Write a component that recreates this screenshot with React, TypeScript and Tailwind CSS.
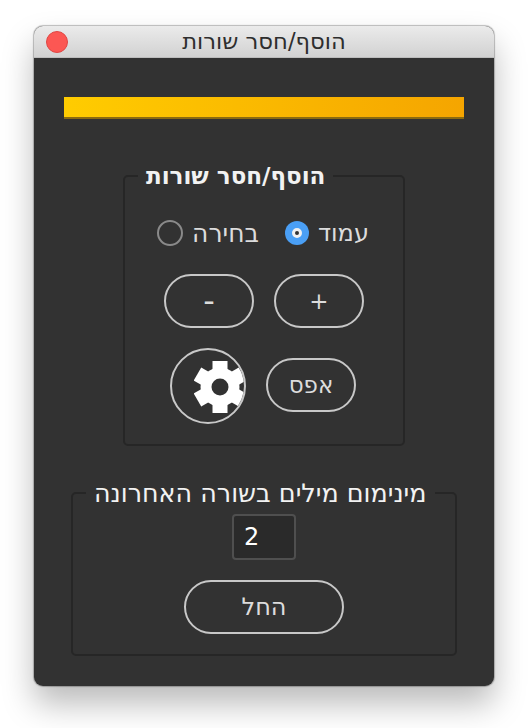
import React from 'react';

function PillButton({ label, className }: { label: string; className: string }) {
  return (
    <button className={`flex items-center justify-center rounded-full border-2 border-[#c8c8c8] text-[#dcdcdc] ${className}`}>
      {label}
    </button>
  );
}

function Gear() {
  return (
    <svg viewBox="0 0 52 52" className="w-[52px] h-[52px] absolute left-[22px] top-[11px]">
      <circle cx="26" cy="26" r="19.5" fill="#ffffff" />
      {[0, 60, 120, 180, 240, 300].map((a) => (
        <rect key={a} x="18.5" y="0" width="15" height="12" fill="#ffffff" transform={`rotate(${a} 26 26)`} />
      ))}
      <circle cx="26" cy="26" r="8.5" fill="#323232" />
    </svg>
  );
}

function Radio({ label, checked, className }: { label: string; checked?: boolean; className: string }) {
  return (
    <label className={`flex items-center gap-[9px] text-[#dcdcdc] leading-none ${className}`}>
      <span>{label}</span>
      {checked ? (
        <span className="w-[24px] h-[24px] rounded-full bg-[#4a9ff5] flex items-center justify-center">
          <span className="w-[10px] h-[10px] rounded-full border-[3px] border-[#f0f0f0] bg-[#323232]" />
        </span>
      ) : (
        <span className="w-[26px] h-[26px] rounded-full border-2 border-[#8a8a8a]" />
      )}
    </label>
  );
}

export default function App() {
  return (
    <div className="w-[528px] h-[728px] bg-white pt-[26px] pl-[34px] overflow-hidden font-['DejaVu_Sans','Liberation_Sans',sans-serif]">
      <div className="w-[460px] h-[660px] rounded-[9px] overflow-hidden bg-[#323232] flex flex-col shadow-[0_18px_32px_rgba(0,0,0,0.27),0_0_1px_1px_rgba(0,0,0,0.25)]">
        {/* Title bar */}
        <div className="relative h-[32px] flex-shrink-0 flex items-center justify-center bg-gradient-to-b from-[#ebebeb] to-[#d2d2d2] border-b border-[#bdbdbd]">
          <span className="absolute left-[12px] top-[5px] w-[22px] h-[22px] rounded-full bg-[#fc5753] border border-[#df4744]" />
          <span dir="rtl" className="text-[22.7px] leading-none text-[#2e2e2e]">הוסף/חסר שורות</span>
        </div>

        <div className="flex flex-col items-center">
          {/* Progress */}
          <div className="mt-[39px] w-[400px] h-[22px] bg-gradient-to-r from-[#ffcc00] to-[#f5a500] border-b-2 border-[#8a6a10]" />

          {/* Add / remove lines */}
          <fieldset className="mt-[46px] w-[282px] h-[281px] rounded-[5px] border-2 border-[#262626]">
            <legend dir="rtl" className="ml-[13px] px-[8px] text-[23px] font-bold leading-[22px] text-[#f2f2f2]">הוסף/חסר שורות</legend>
            <div dir="rtl" className="mt-[33px] pr-[2px] flex justify-center gap-[26px]">
              <Radio label="עמוד" checked className="text-[24px]" />
              <Radio label="בחירה" className="text-[25px]" />
            </div>
            <div dir="rtl" className="mt-[28px] flex justify-center gap-[20px]">
              <PillButton label="+" className="w-[90px] h-[54px] text-[23px]" />
              <PillButton label="-" className="w-[90px] h-[54px] text-[32px] leading-none" />
            </div>
            <div dir="rtl" className="mt-[20px] pr-[2px] flex justify-center items-center gap-[20px]">
              <PillButton label="אפס" className="w-[90px] h-[54px] mb-[2px] text-[23px]" />
              <button className="relative w-[76px] h-[76px] rounded-full border-2 border-[#c8c8c8] overflow-hidden">
                <Gear />
              </button>
            </div>
          </fieldset>

          {/* Minimum words */}
          <fieldset className="mt-[36px] w-[386px] h-[174px] rounded-[5px] border-2 border-[#262626] flex flex-col items-center">
            <legend dir="rtl" className="ml-[13px] px-[8px] text-[25.4px] leading-[22px] text-[#f2f2f2]">מינימום מילים בשורה האחרונה</legend>
            <div className="mt-[10px] w-[64px] h-[46px] rounded-[4px] border-2 border-[#4f4f4f] bg-[#2a2a2a] pl-[10px] flex items-center text-[24px] text-white mx-auto">2</div>
            <PillButton label="החל" className="mt-[20px] w-[160px] h-[54px] mx-auto text-[24px]" />
          </fieldset>
        </div>
      </div>
    </div>
  );
}
